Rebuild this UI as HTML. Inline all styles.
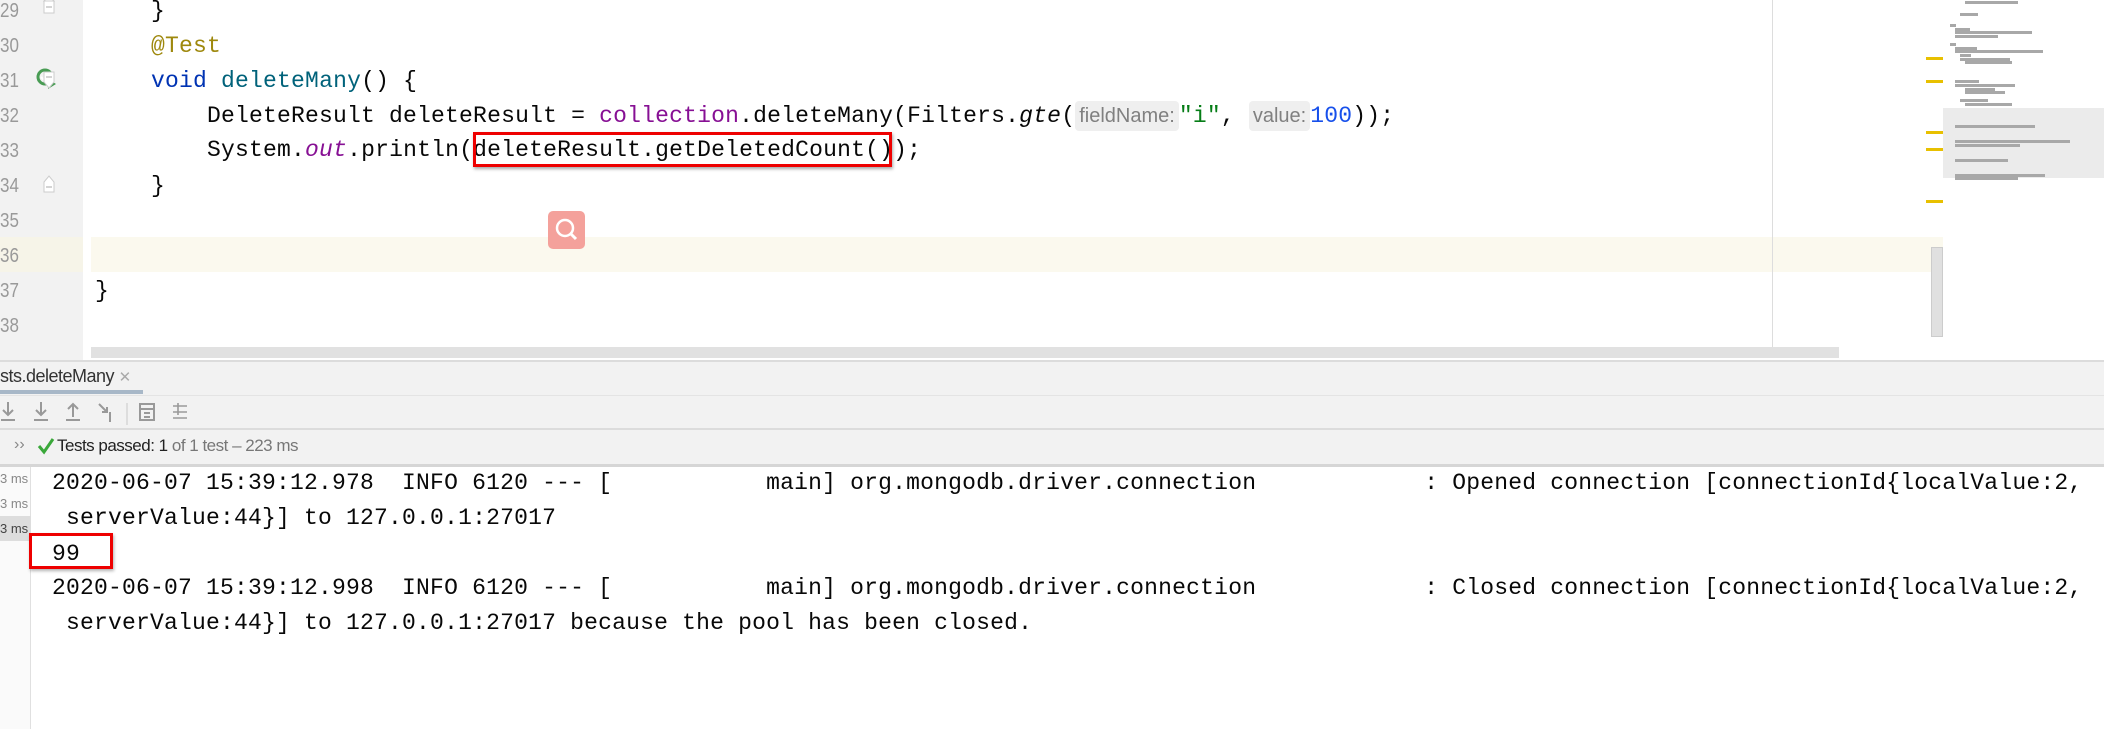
<!DOCTYPE html>
<html><head><meta charset="utf-8"><style>
*{margin:0;padding:0;box-sizing:border-box}
body{width:2104px;height:729px;overflow:hidden;background:#fff;position:relative;font-family:"Liberation Mono",monospace}
.a{position:absolute}
.m{position:absolute;font-family:"Liberation Mono",monospace;font-size:23px;letter-spacing:0.2px;white-space:pre;color:#080808;line-height:35px;height:35px}
.ln{position:absolute;left:0;width:24px;font-family:"Liberation Sans",sans-serif;font-size:20px;color:#999;line-height:35px;transform:scaleX(.85);transform-origin:left}
.kw{color:#0033b3}.fn{color:#00627a}.an{color:#9e880d}.pf{color:#871094}.st{color:#067d17}.nu{color:#1750eb}
.hint{display:inline-block;background:#efefef;color:#808080;font-family:"Liberation Sans",sans-serif;font-size:20px;letter-spacing:0;border-radius:4px;line-height:30px;padding:0 4px;vertical-align:top;margin-top:2px}
.ms{position:absolute;left:0;font-family:"Liberation Sans",sans-serif;font-size:13px;color:#888}
.bar{position:absolute;height:3px;background:#a8a8a8}
</style></head><body>
<div class="a" style="left:0;top:0;width:83px;height:362px;background:#f2f2f2"></div>
<div class="a" style="left:0;top:237px;width:83px;height:35px;background:#f6f4e8"></div>
<div class="a" style="left:91px;top:237px;width:1852px;height:35px;background:#fbf9ee"></div>
<div class="a" style="left:1772px;top:0;width:1px;height:358px;background:#ddd"></div>
<div class="ln" style="top:-6px">29</div>
<div class="ln" style="top:29px">30</div>
<div class="ln" style="top:64px">31</div>
<div class="ln" style="top:99px">32</div>
<div class="ln" style="top:134px">33</div>
<div class="ln" style="top:169px">34</div>
<div class="ln" style="top:204px">35</div>
<div class="ln" style="top:239px">36</div>
<div class="ln" style="top:274px">37</div>
<div class="ln" style="top:309px">38</div>
<svg class="a" style="left:36px;top:68px" width="22" height="22" viewBox="0 0 22 22"><circle cx="9" cy="9" r="7" fill="none" stroke="#499c54" stroke-width="3"/><path d="M5 9l3 3 5-6" stroke="#fff" stroke-width="2" fill="none"/><path d="M12 11l8 5-8 5z" fill="#499c54"/></svg>
<svg class="a" style="left:43px;top:0" width="12" height="200"><path d="M1 1h10v12H1z M6 -4l5 5H1z" fill="#fff" stroke="#ccc"/><path d="M1 72h10v10l-5 6-5-6z" fill="#fff" stroke="#ccc"/><path d="M1 182l5-6 5 6v10H1z" fill="#fff" stroke="#ccc"/><path d="M3 7h6M3 77h6M3 187h6" stroke="#aaa"/></svg>
<div class="m" style="left:95px;top:-6px">    }</div>
<div class="m" style="left:95px;top:29px">    <span class="an">@Test</span></div>
<div class="m" style="left:95px;top:64px">    <span class="kw">void</span> <span class="fn">deleteMany</span>() {</div>
<div class="m" style="left:95px;top:99px">        DeleteResult deleteResult = <span class="pf">collection</span>.deleteMany(Filters.<i>gte</i>(<span class="hint">fieldName:</span><span class="st">"i"</span>, <span class="hint">value:</span><span class="nu">100</span>));</div>
<div class="m" style="left:95px;top:133px">        System.<i class="pf">out</i>.println(deleteResult.getDeletedCount());</div>
<div class="m" style="left:95px;top:169px">    }</div>
<div class="m" style="left:95px;top:274px">}</div>
<div class="a" style="left:473px;top:132px;width:419px;height:35px;border:3px solid #e00;box-shadow:1px 2px 3px rgba(0,0,0,.35)"></div>
<div class="a" style="left:548px;top:211px;width:37px;height:38px;background:#f4a19b;border-radius:5px"></div>
<svg class="a" style="left:548px;top:211px" width="37" height="38"><circle cx="17" cy="17" r="8" fill="none" stroke="#fff" stroke-width="2.5"/><path d="M23 23l5 5" stroke="#fff" stroke-width="3"/></svg>
<div class="a" style="left:91px;top:347px;width:1748px;height:11px;background:#e1e1e1"></div>
<div class="a" style="left:1931px;top:247px;width:12px;height:90px;background:#e0e0e0;border:1px solid #ccc"></div>
<div class="a" style="left:1943px;top:108px;width:161px;height:70px;background:#ebebeb"></div>
<div class="a" style="left:1926px;top:57px;width:17px;height:3px;background:#e8c000"></div>
<div class="a" style="left:1926px;top:80px;width:17px;height:3px;background:#e8c000"></div>
<div class="a" style="left:1926px;top:131px;width:17px;height:3px;background:#e8c000"></div>
<div class="a" style="left:1926px;top:148px;width:17px;height:3px;background:#e8c000"></div>
<div class="a" style="left:1926px;top:200px;width:17px;height:3px;background:#e8c000"></div>
<div class="bar" style="left:1965px;top:1px;width:53px"></div>
<div class="bar" style="left:1960px;top:13px;width:18px"></div>
<div class="bar" style="left:1950px;top:24px;width:6px"></div>
<div class="bar" style="left:1955px;top:28px;width:15px"></div>
<div class="bar" style="left:1955px;top:31px;width:77px"></div>
<div class="bar" style="left:1955px;top:35px;width:43px"></div>
<div class="bar" style="left:1950px;top:43px;width:6px"></div>
<div class="bar" style="left:1955px;top:47px;width:22px"></div>
<div class="bar" style="left:1955px;top:50px;width:88px"></div>
<div class="bar" style="left:1960px;top:54px;width:11px"></div>
<div class="bar" style="left:1960px;top:58px;width:50px"></div>
<div class="bar" style="left:1965px;top:61px;width:47px"></div>
<div class="bar" style="left:1955px;top:80px;width:24px"></div>
<div class="bar" style="left:1955px;top:84px;width:60px"></div>
<div class="bar" style="left:1965px;top:88px;width:30px"></div>
<div class="bar" style="left:1965px;top:91px;width:40px"></div>
<div class="bar" style="left:1960px;top:99px;width:28px"></div>
<div class="bar" style="left:1965px;top:103px;width:47px"></div>
<div class="bar" style="left:1955px;top:125px;width:80px"></div>
<div class="bar" style="left:1955px;top:140px;width:115px"></div>
<div class="bar" style="left:1955px;top:144px;width:65px"></div>
<div class="bar" style="left:1955px;top:159px;width:53px"></div>
<div class="bar" style="left:1955px;top:174px;width:90px"></div>
<div class="bar" style="left:1955px;top:177px;width:63px"></div>
<div class="a" style="left:0;top:360px;width:2104px;height:105px;background:#f2f2f2;border-top:2px solid #dcdcdc"></div>
<div class="a" style="left:0;top:366px;font-family:'Liberation Sans',sans-serif;font-size:18px;color:#333;letter-spacing:-0.5px">sts.deleteMany <span style="color:#aaa;font-size:15px">✕</span></div>
<div class="a" style="left:0;top:390px;width:143px;height:4px;background:#a8b8c8"></div>
<div class="a" style="left:0;top:395px;width:2104px;height:1px;background:#e4e4e4"></div>
<svg class="a" style="left:0;top:398px" width="200" height="28" stroke="#999" stroke-width="2" fill="none"><path d="M8 4v13M3 12l5 5 5-5M1 22h14"/><path d="M41 4v13M36 12l5 5 5-5M34 22h14"/><path d="M73 6v13M68 11l5-5 5 5M66 22h14"/><path d="M99 6l8 8M107 9v5h-5M110 14v10"/><path d="M127 5v22" stroke="#ddd"/><rect x="140" y="6" width="14" height="16"/><path d="M140 11h14M144 15h6M144 19h6"/><path d="M173 8h14M173 14h14M173 20h14M178 5v12" stroke-width="1.6"/></svg>
<div class="a" style="left:0;top:428px;width:2104px;height:2px;background:#dcdcdc"></div>
<div class="a" style="left:14px;top:436px;font-family:'Liberation Sans',sans-serif;font-size:16px;color:#888">››</div>
<svg class="a" style="left:37px;top:437px" width="18" height="18"><path d="M2 9l5 6 9-13" stroke="#3aa83a" stroke-width="3" fill="none"/></svg>
<div class="a" style="left:57px;top:436px;font-family:'Liberation Sans',sans-serif;font-size:17px;color:#222;letter-spacing:-0.5px">Tests passed: <span>1</span><span style="color:#777"> of 1 test – 223 ms</span></div>
<div class="a" style="left:0;top:464px;width:2104px;height:3px;background:#d6d6d6"></div>
<div class="a" style="left:0;top:467px;width:31px;height:262px;background:#fafafa;border-right:1px solid #e0e0e0"></div>
<div class="a" style="left:0;top:516px;width:31px;height:25px;background:#ddd"></div>
<div class="ms" style="top:471px">3 ms</div>
<div class="ms" style="top:496px">3 ms</div>
<div class="ms" style="top:521px;color:#444">3 ms</div>
<div class="m" style="left:52px;top:466px">2020-06-07 15:39:12.978  INFO 6120 --- [           main] org.mongodb.driver.connection            : Opened connection [connectionId{localValue:2,</div>
<div class="m" style="left:52px;top:501px"> serverValue:44}] to 127.0.0.1:27017</div>
<div class="m" style="left:52px;top:537px">99</div>
<div class="m" style="left:52px;top:571px">2020-06-07 15:39:12.998  INFO 6120 --- [           main] org.mongodb.driver.connection            : Closed connection [connectionId{localValue:2,</div>
<div class="m" style="left:52px;top:606px"> serverValue:44}] to 127.0.0.1:27017 because the pool has been closed.</div>
<div class="a" style="left:29px;top:533px;width:84px;height:36px;border:3px solid #e00;box-shadow:1px 2px 3px rgba(0,0,0,.3)"></div>
</body></html>
